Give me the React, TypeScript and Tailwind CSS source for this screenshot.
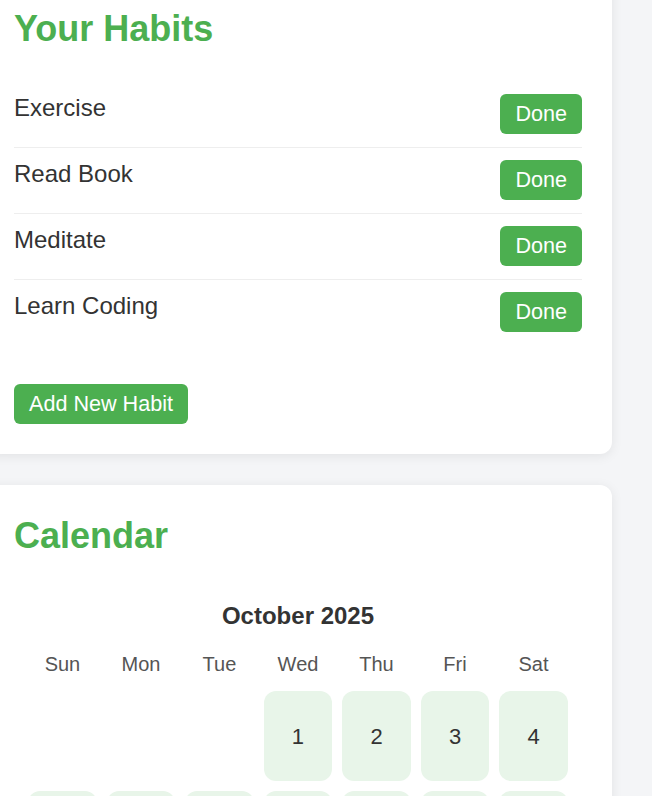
import React from "react"

const habits = ["Exercise", "Read Book", "Meditate", "Learn Coding"]
const weekdays = ["Sun", "Mon", "Tue", "Wed", "Thu", "Fri", "Sat"]

// October 2025 starts on a Wednesday
const firstDay = 3
const daysInMonth = 31

export default function App() {
  const cells: (number | null)[] = [
    ...Array.from({ length: firstDay }, () => null),
    ...Array.from({ length: daysInMonth }, (_, i) => i + 1),
  ]

  return (
    <div className="min-h-screen overflow-hidden bg-[#f4f5f7] font-['Liberation_Sans',Arial,sans-serif] text-[#333]">
      <div className="-ml-4 -mt-[22px] flex w-[628px] flex-col gap-[31px]">
        <section className="rounded-[12px] bg-white p-[30px] shadow-[0_2px_12px_rgba(0,0,0,0.08)]">
          <h2 className="mb-[33px] text-[36px] font-bold leading-[41px] text-[#4caf50]">Your Habits</h2>
          <ul>
            {habits.map((habit, i) => (
              <li
                key={habit}
                className={
                  i < habits.length - 1
                    ? "flex items-start justify-between border-b border-[#eee] pb-[13px] pt-3"
                    : "flex items-start justify-between pt-3 pb-[13px]"
                }
              >
                <span className="text-[24px] leading-[28px]">{habit}</span>
                <button className="h-10 rounded-[6px] bg-[#4caf50] px-[15px] text-[21.6px] leading-[24px] text-white">
                  Done
                </button>
              </li>
            ))}
          </ul>
          <button className="mt-[39px] h-10 rounded-[6px] bg-[#4caf50] px-[15px] text-[21.6px] leading-[24px] text-white">
            Add New Habit
          </button>
        </section>

        <section className="rounded-[12px] bg-white p-[30px] shadow-[0_2px_12px_rgba(0,0,0,0.08)]">
          <h2 className="text-[36px] font-bold leading-[41px] text-[#4caf50]">Calendar</h2>
          <h3 className="mt-[46px] text-center text-[24px] font-bold leading-[28px]">October 2025</h3>
          <div className="mx-auto mt-[23px] grid w-[540px] grid-cols-7 gap-x-[9.6px]">
            {weekdays.map((d) => (
              <div key={d} className="text-center text-[20px] leading-[23px] text-[#555]">
                {d}
              </div>
            ))}
          </div>
          <div className="mx-auto mt-[15px] grid w-[540px] grid-cols-7 gap-[9.6px]">
            {cells.map((day, i) =>
              day === null ? (
                <div key={`e${i}`} className="h-[90px]" />
              ) : (
                <div
                  key={day}
                  className="flex h-[90px] items-center justify-center rounded-[12px] bg-[#e8f5e9] text-[22px]"
                >
                  {day}
                </div>
              )
            )}
          </div>
        </section>
      </div>
    </div>
  )
}
